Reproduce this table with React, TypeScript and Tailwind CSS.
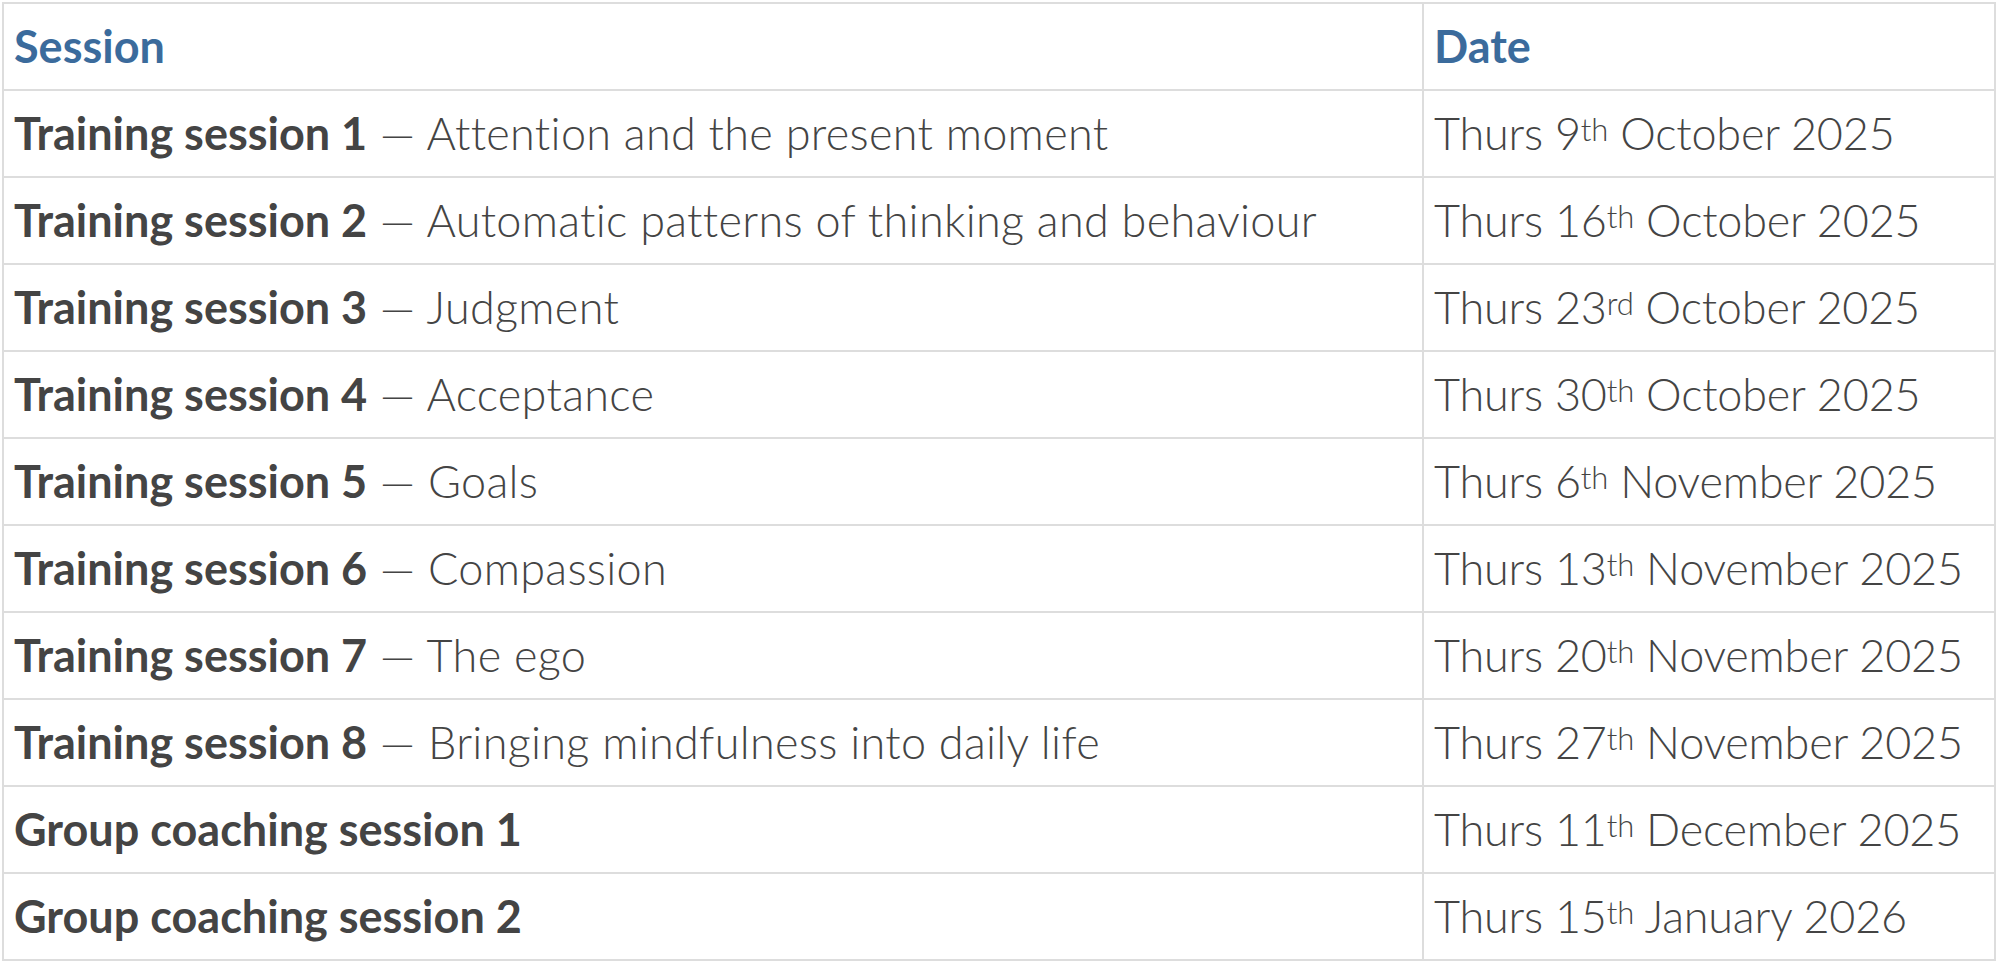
const rows: { title: string; topic?: string; day: string; suffix: string; rest: string }[] = [
  { title: "Training session 1", topic: "Attention and the present moment", day: "9", suffix: "th", rest: "October 2025" },
  { title: "Training session 2", topic: "Automatic patterns of thinking and behaviour", day: "16", suffix: "th", rest: "October 2025" },
  { title: "Training session 3", topic: "Judgment", day: "23", suffix: "rd", rest: "October 2025" },
  { title: "Training session 4", topic: "Acceptance", day: "30", suffix: "th", rest: "October 2025" },
  { title: "Training session 5", topic: "Goals", day: "6", suffix: "th", rest: "November 2025" },
  { title: "Training session 6", topic: "Compassion", day: "13", suffix: "th", rest: "November 2025" },
  { title: "Training session 7", topic: "The ego", day: "20", suffix: "th", rest: "November 2025" },
  { title: "Training session 8", topic: "Bringing mindfulness into daily life", day: "27", suffix: "th", rest: "November 2025" },
  { title: "Group coaching session 1", day: "11", suffix: "th", rest: "December 2025" },
  { title: "Group coaching session 2", day: "15", suffix: "th", rest: "January 2026" },
];

export default function App() {
  return (
    <div className="bg-white w-[2000px] h-[977px] pt-[2px] pl-[2px] font-['Lato',sans-serif] text-[#444]">
      <table className="w-[1994px] border-collapse border-2 border-[#ddd] text-[45px] leading-none">
        <thead>
          <tr className="h-[87px]">
            <th className="border-2 border-[#ddd] px-[10px] text-left font-bold text-[#3b6b9c] w-[1420px]">Session</th>
            <th className="border-2 border-[#ddd] px-[10px] text-left font-bold text-[#3b6b9c]">Date</th>
          </tr>
        </thead>
        <tbody>
          {rows.map((r) => (
            <tr key={r.title} className="h-[87px]">
              <td className="border-2 border-[#ddd] px-[10px] whitespace-nowrap">
                <span className="font-bold">{r.title}</span>
                {r.topic && <span className="font-light tracking-[0.3px]"> — {r.topic}</span>}
              </td>
              <td className="border-2 border-[#ddd] px-[10px] whitespace-nowrap font-light tracking-[-0.2px]">
                Thurs {r.day}
                <sup className="text-[31px] relative -top-[9px]">{r.suffix}</sup> {r.rest}
              </td>
            </tr>
          ))}
        </tbody>
      </table>
    </div>
  );
}
